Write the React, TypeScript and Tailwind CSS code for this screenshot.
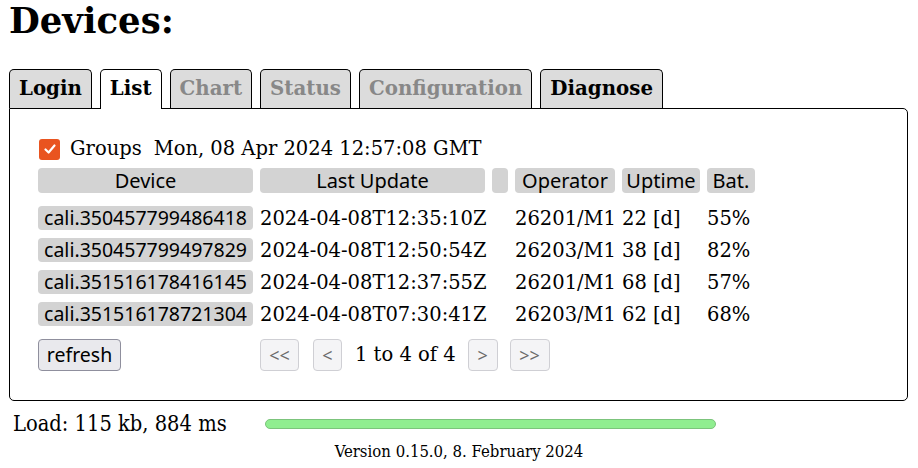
import React from "react";

const serif = "font-['DejaVu_Serif',serif]";
const condensed = "font-['DejaVu_Serif_Condensed','DejaVu_Serif',serif] font-stretch-condensed";
const sans = "font-['Noto_Sans',sans-serif]";

const tabs = [
  { name: "Login", state: "on" },
  { name: "List", state: "active" },
  { name: "Chart", state: "off" },
  { name: "Status", state: "off" },
  { name: "Configuration", state: "off" },
  { name: "Diagnose", state: "on" },
];

const devices = [
  ["cali.350457799486418", "2024-04-08T12:35:10Z", "26201/M1", "22 [d]", "55%"],
  ["cali.350457799497829", "2024-04-08T12:50:54Z", "26203/M1", "38 [d]", "82%"],
  ["cali.351516178416145", "2024-04-08T12:37:55Z", "26201/M1", "68 [d]", "57%"],
  ["cali.351516178721304", "2024-04-08T07:30:41Z", "26203/M1", "62 [d]", "68%"],
];

const cols = "grid grid-cols-[215px_225px_16px_100px_78px_48px] gap-x-[7px]";

const PageButton: React.FC<{ label: string; w: string }> = ({ label, w }) => (
  <button
    className={`${w} h-8 rounded border border-[#cfcfd4] bg-[#f4f4f6] text-[#6b6b6b] text-[18px] ${sans}`}
  >
    {label}
  </button>
);

const App: React.FC = () => {
  return (
    <div className={`w-[918px] h-[468px] bg-white text-black ${serif} overflow-hidden whitespace-nowrap`}>
      <h1 className="text-[35.5px] font-bold leading-none pl-[9px] pt-[3px] h-[69px]">Devices:</h1>

      {/* tab strip */}
      <div className="flex gap-[8px] pl-[9px] h-[39px] relative z-10">
        {tabs.map((t) => (
          <div
            key={t.name}
            className={`px-[9px] rounded-t-[5px] border border-black border-b-0 text-[19.8px] font-bold flex items-center ${
              t.state === "active" ? "bg-white h-[40px]" : "bg-[#dcdcdc] h-[39px] border-b"
            } ${t.state === "off" ? "text-[#888888]" : "text-black"}`}
          >
            <span className="pb-[1px]">{t.name}</span>
          </div>
        ))}
      </div>

      {/* panel */}
      <div className="ml-[9px] w-[899px] h-[293px] border border-black rounded-tr-[5px] rounded-b-[5px] pl-[28px] pt-[28px]">
        <div className="flex items-center h-[24px] text-[19.5px]">
          <span className="w-[21px] h-[21px] ml-[1px] rounded-[3px] bg-[#e95420] flex items-center justify-center">
            <svg width="14" height="14" viewBox="0 0 14 14" fill="none">
              <path d="M2.5 7.5 L5.6 10.5 L11.5 3.5" stroke="white" strokeWidth="2.2" strokeLinecap="round" strokeLinejoin="round" />
            </svg>
          </span>
          <span className="ml-[10px]">Groups</span>
          <span className="ml-[12px]">Mon, 08 Apr 2024 12:57:08 GMT</span>
        </div>

        <div className={`${cols} mt-[7px] h-[25px] text-[20px] ${sans}`}>
          {["Device", "Last Update", "", "Operator", "Uptime", "Bat."].map((h, i) => (
            <div key={i} className="bg-[#d3d3d3] rounded-[4px] flex items-center justify-center leading-none">
              {h}
            </div>
          ))}
        </div>

        <div className="mt-[9px]">
          {devices.map((d) => (
            <div key={d[0]} className={`${cols} h-8 items-center text-[19.5px] leading-none`}>
              <div className={`h-6 bg-[#d3d3d3] rounded-[4px] flex items-center justify-center text-[19.5px] ${sans}`}>
                {d[0]}
              </div>
              <div className="pt-[1px]">{d[1]}</div>
              <div />
              <div className="pt-[1px]">{d[2]}</div>
              <div className="pt-[1px]">{d[3]}</div>
              <div className="pt-[1px]">{d[4]}</div>
            </div>
          ))}
        </div>

        <div className="flex items-center mt-[9px] h-8">
          <button
            className={`w-[83px] h-8 rounded border border-[#8f8f9d] bg-[#e9e9ed] text-[19.5px] leading-none ${sans}`}
          >
            refresh
          </button>
          <div className="ml-[139px] flex items-center">
            <PageButton label="<<" w="w-[39px]" />
            <div className="w-[14px]" />
            <PageButton label="<" w="w-[29px]" />
            <span className="text-[19.5px] ml-[13px] mr-[12px]">1 to 4 of 4</span>
            <PageButton label=">" w="w-[30px]" />
            <div className="w-[12px]" />
            <PageButton label=">>" w="w-[40px]" />
          </div>
        </div>
      </div>

      {/* footer */}
      <div className="flex items-center h-[48px] pl-[13px] pb-[2px]">
        <span className={`text-[21.7px] w-[252px] ${condensed}`}>Load: 115 kb, 884 ms</span>
        <div className="w-[451px] h-[10px] rounded-full bg-[#90ee90] border border-[#7cc47c]" />
      </div>
      <div className={`text-center text-[16.6px] -mt-[9px] ${condensed}`}>
        Version 0.15.0, 8. February 2024
      </div>
    </div>
  );
};

export default App;
